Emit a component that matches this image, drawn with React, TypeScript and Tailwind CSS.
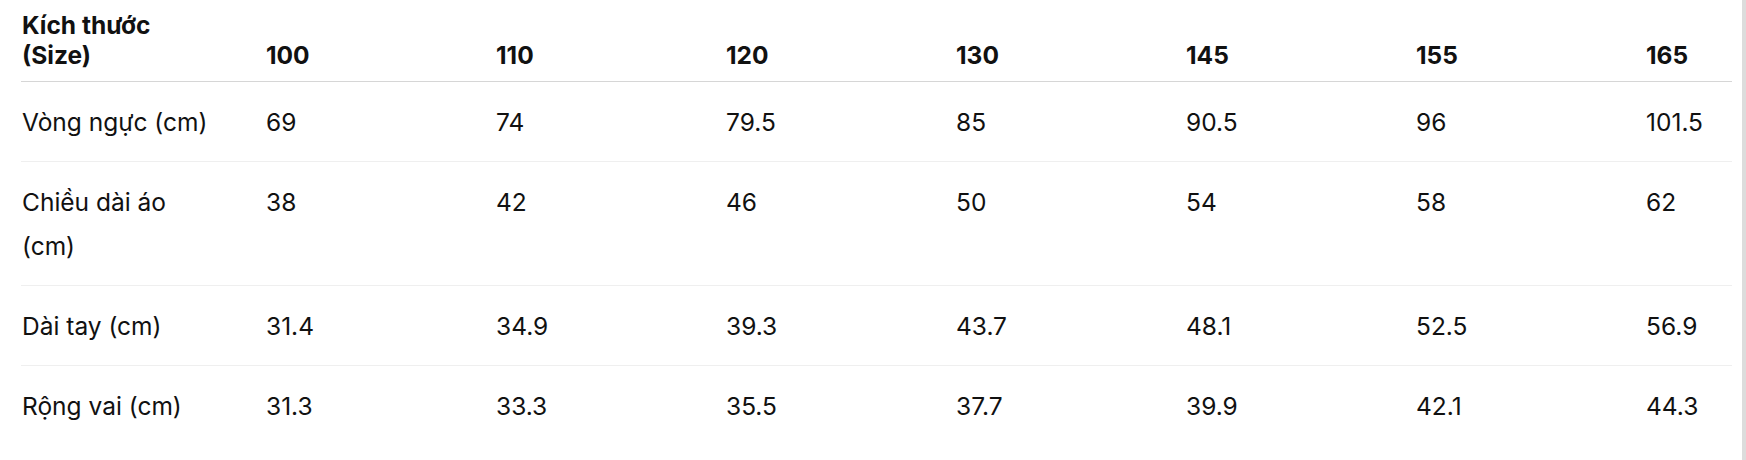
import React from 'react';

const sizes = ['100', '110', '120', '130', '145', '155', '165'];

const rows: { label: string; values: string[] }[] = [
  { label: 'Vòng ngực (cm)', values: ['69', '74', '79.5', '85', '90.5', '96', '101.5'] },
  { label: 'Chiều dài áo (cm)', values: ['38', '42', '46', '50', '54', '58', '62'] },
  { label: 'Dài tay (cm)', values: ['31.4', '34.9', '39.3', '43.7', '48.1', '52.5', '56.9'] },
  { label: 'Rộng vai (cm)', values: ['31.3', '33.3', '35.5', '37.7', '39.9', '42.1', '44.3'] },
];

const cols = 'grid grid-cols-[245px_repeat(6,230px)_1fr]';

export default function App() {
  return (
    <div className="flex w-[1746px] h-[460px] bg-white text-[#111] font-['Inter','Liberation_Sans',sans-serif] text-[24.5px]">
      <div className="flex-1 pl-[21px] pr-[10px]">
        {/* header */}
        <div className={`${cols} border-b border-[#d6d6d6] font-bold leading-[30px] pt-[10px] pb-[11px]`}>
          <div className="w-[150px] pl-px">Kích thước (Size)</div>
          {sizes.map(s => (
            <div key={s} className="self-end">{s}</div>
          ))}
        </div>

        {/* body */}
        {rows.map((r, i) => (
          <div
            key={r.label}
            className={`${cols} leading-[44px] pt-[18px] pb-[17px] ${i < rows.length - 1 ? 'border-b border-[#efefef]' : ''}`}
          >
            <div className="w-[200px] pl-px">{r.label}</div>
            {r.values.map((v, j) => (
              <div key={j}>{v}</div>
            ))}
          </div>
        ))}
      </div>
      <div className="w-[4px] bg-[#dcdcdc]" />
    </div>
  );
}
